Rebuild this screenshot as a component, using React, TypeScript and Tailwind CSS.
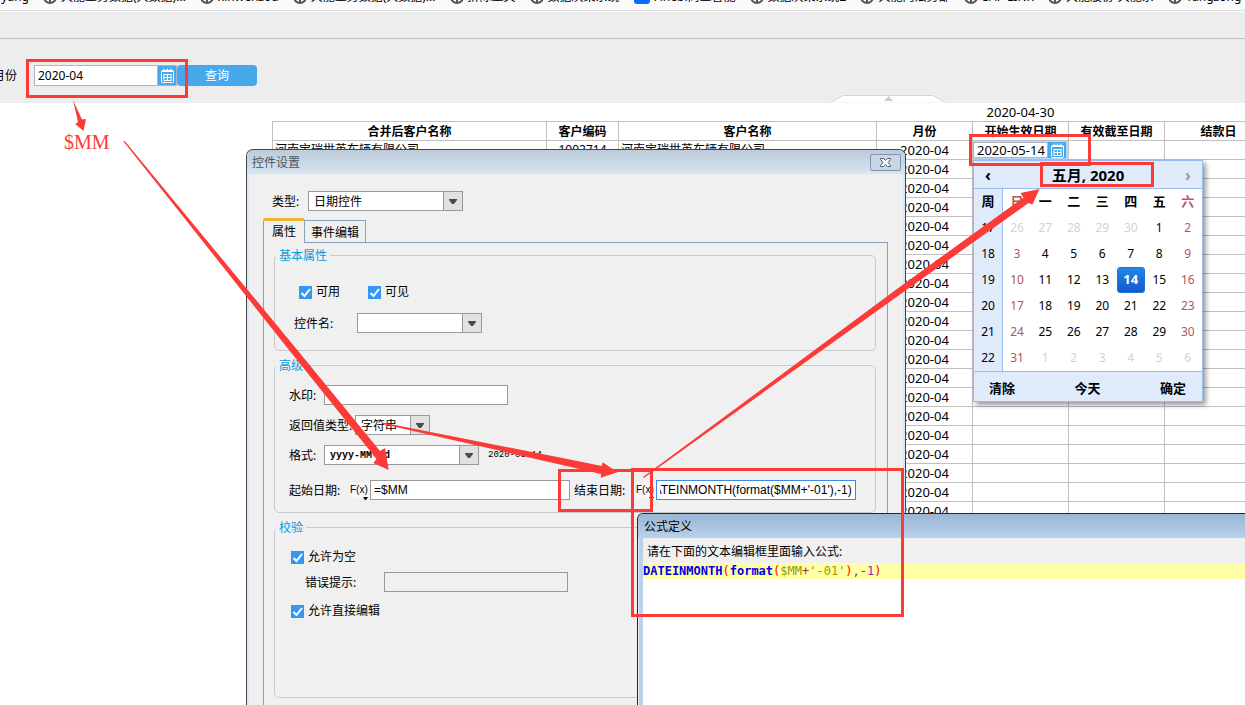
import { useEffect, useRef, useState } from 'react';
import type { ReactNode } from 'react';

const bookmarks = [
  { label: '天能业务数据(大数据)...' },
  { label: 'xinwenzou' },
  { label: '天能业务数据(大数据)...' },
  { label: '拼际显夹' },
  { label: '数据决策系统' },
  { label: 'Finebi商业智能', blue: true },
  { label: '数据决策系统2' },
  { label: '天能内法务部' },
  { label: 'SAP LINK' },
  { label: '天能股份-天能系' },
  { label: 'Yangzong' },
];

const weekdays = ['日', '一', '二', '三', '四', '五', '六'];

const weeks = [
  { no: 17, days: [26, 27, 28, 29, 30, 1, 2] },
  { no: 18, days: [3, 4, 5, 6, 7, 8, 9] },
  { no: 19, days: [10, 11, 12, 13, 14, 15, 16] },
  { no: 20, days: [17, 18, 19, 20, 21, 22, 23] },
  { no: 21, days: [24, 25, 26, 27, 28, 29, 30] },
  { no: 22, days: [31, 1, 2, 3, 4, 5, 6] },
];

const months = Array.from({ length: 20 }, () => '2020-04');

function CalendarIcon() {
  return (
    <svg viewBox="0 0 15 15" className="size-[15px]" fill="none" stroke="white">
      <rect x="1.5" y="2.5" width="12" height="12" rx="1" />
      <path d="M2 3.500h11M4 6.500v6M7.500 6v6.500M11 6.500v6M3.500 6.500h8M3.500 9.500h8M3.500 12.500h8" />
      <path d="M4 .5v3M7.500 .5v3M11 .5v3" />
    </svg>
  );
}

function Globe() {
  return (
    <svg viewBox="0 0 14 14" className="size-[14px] shrink-0" fill="none" stroke="#555" strokeWidth="2">
      <circle cx="7" cy="7" r="6" fill="white" />
      <path d="M3 4l3 2 1 3 0 3M9 3l2 3 -1 2" />
    </svg>
  );
}

function Combo({ id, value, className, textClass = '' }: { id: string; value: string; className: string; textClass?: string }) {
  return (
    <div className={`relative h-5 ${className}`}>
      <select
        id={id}
        defaultValue={value}
        className={`block h-5 w-full appearance-none rounded-none border border-[#999] bg-white pt-px pl-[5px] outline-none ${textClass}`}
      >
        <option value={value}>{value}</option>
      </select>
      <span className="pointer-events-none absolute inset-y-0 right-0 flex w-5 items-center justify-center border border-[#999] bg-[#e1e1e1]">
        <svg viewBox="0 0 8 5" className="h-[5px] w-2" fill="#4d4d4d">
          <path d="M0 0h8v1L5 5H3L0 1z" />
        </svg>
      </span>
    </div>
  );
}

function Check({ label }: { label: string }) {
  return (
    <label className="flex h-5 items-center gap-1">
      <span className="relative size-[13px]">
        <input type="checkbox" defaultChecked className="peer block size-[13px] appearance-none bg-white checked:bg-[#3497f3]" />
        <svg viewBox="0 0 13 13" className="pointer-events-none absolute inset-0 hidden peer-checked:block" fill="none" stroke="white" strokeWidth="2">
          <path d="M2.500 7l3 3L11 3" />
        </svg>
      </span>
      {label}
    </label>
  );
}

function Group({ title, className, children }: { title: string; className: string; children: ReactNode }) {
  return (
    <fieldset className={`mr-[11px] ml-[10px] rounded-[5px] border border-[#c9c9c9] ${className}`}>
      <legend className="ml-px px-[3px] pt-[2px] leading-[14px] text-[#0a9bdc]">{title}</legend>
      {children}
    </fieldset>
  );
}

function FxButton() {
  return (
    <button type="button" className="relative h-4 w-5 bg-[#f8f8f8] text-left font-['Liberation_Sans',sans-serif] text-[10px] leading-4">
      F(x)
      <svg viewBox="0 0 5 3" className="absolute right-0.5 -bottom-0.5 h-[3px] w-[5px]">
        <path d="M0 0h5L3 3H2z" />
      </svg>
    </button>
  );
}

function ReportTable() {
  const cell = 'h-[19px] border border-[#c0c0c0] p-0 overflow-hidden whitespace-nowrap';
  return (
    <table className="ml-[272px] w-[1000px] table-fixed border-collapse leading-[18px]">
      <colgroup>
        <col className="w-[274px]" />
        <col className="w-[72px]" />
        <col className="w-[258px]" />
        <col className="w-[96px]" />
        <col className="w-[96px]" />
        <col className="w-[96px]" />
        <col className="w-[108px]" />
      </colgroup>
      <thead>
        <tr>
          <td colSpan={4} className="h-[18px] p-0"></td>
          <td className="p-0 text-center text-[13px]">2020-04-30</td>
          <td colSpan={2} className="p-0"></td>
        </tr>
        <tr>
          {['合并后客户名称', '客户编码', '客户名称', '月份', '开始生效日期', '有效截至日期', '结款日'].map((h) => (
            <th key={h} className={`${cell} pt-px leading-[17px] font-bold`}>{h}</th>
          ))}
        </tr>
      </thead>
      <tbody>
        {months.map((month, i) => (
          <tr key={i}>
            <td className={`${cell} pl-0.5`}>{i === 0 ? '河南宝瑞世英车辆有限公司' : ''}</td>
            <td className={`${cell} text-center`}>{i === 0 ? '1002714' : ''}</td>
            <td className={`${cell} pl-0.5`}>{i === 0 ? '河南宝瑞世英车辆有限公司' : ''}</td>
            <td className={`${cell} text-center text-[13px]`}>{month}</td>
            <td className={cell}>
              {i === 0 && (
                <div className="flex h-[18px] bg-[#b9daf5] py-px pr-0.5">
                  <input
                    aria-label="开始生效日期"
                    defaultValue="2020-05-14"
                    className="h-4 w-[75px] border border-[#a9b4cc] bg-white pl-[3px] text-[13px] outline-none"
                  />
                  <button type="button" aria-label="选择日期" className="flex h-4 w-[18px] items-center justify-center bg-[#48a8ec]">
                    <CalendarIcon />
                  </button>
                </div>
              )}
            </td>
            <td className={cell}></td>
            <td className={cell}></td>
          </tr>
        ))}
      </tbody>
    </table>
  );
}

function DatePicker() {
  const [selected, setSelected] = useState('2-4');

  const dayColor = (w: number, d: number, day: number) => {
    if ((w === 0 && day > 20) || (w === 5 && day < 10)) return 'text-[#d3d3d3]';
    if (d === 0 || d === 6) return 'text-[#b25560]';
    return 'text-black';
  };

  return (
    <div className="absolute top-[160px] left-[973px] w-[230px] border border-[#97bcf3] bg-white shadow-[3px_3px_5px_rgba(0,0,0,0.4)]">
      <div className="flex h-7 items-center justify-between border-b border-[#97bcf3] bg-[#dfebfb]">
        <button type="button" className="w-7 text-base font-bold">‹</button>
        <span className="text-[15px] font-bold">五月, 2020</span>
        <button type="button" className="w-7 text-base font-bold text-[#999]">›</button>
      </div>
      <table className="w-full table-fixed border-collapse text-center">
        <thead>
          <tr>
            <th className="h-[26px] border-r border-[#97bcf3] bg-[#dfebfb] p-0 text-[13px]">周</th>
            {weekdays.map((d, i) => (
              <th key={d} className={`p-0 text-[13px] ${i % 6 === 0 ? 'text-[#b25560]' : ''}`}>{d}</th>
            ))}
          </tr>
        </thead>
        <tbody>
          {weeks.map((week, w) => (
            <tr key={week.no}>
              <td className="h-[26px] border-r border-[#97bcf3] bg-[#dfebfb] p-0">{week.no}</td>
              {week.days.map((day, d) => (
                <td key={d} className="h-[26px] p-0">
                  <button
                    type="button"
                    onClick={() => setSelected(`${w}-${d}`)}
                    className={
                      selected === `${w}-${d}`
                        ? 'block h-[26px] w-full rounded-[3px] border border-[#1b76dd] bg-linear-to-b from-[#1f8ae2] to-[#1b55cf] text-[13px] font-bold text-white'
                        : `block h-[26px] w-full ${dayColor(w, d, day)}`
                    }
                  >
                    {day}
                  </button>
                </td>
              ))}
            </tr>
          ))}
        </tbody>
      </table>
      <div className="flex h-[30px] items-center justify-between border-t border-[#97bcf3] bg-[#dfebfb] pt-1 pr-4 pl-[15px] text-[13px] font-bold">
        <button type="button">清除</button>
        <button type="button">今天</button>
        <button type="button">确定</button>
      </div>
    </div>
  );
}

function WidgetDialog() {
  const endRef = useRef<HTMLInputElement>(null);

  // keep the tail of the formula in view
  useEffect(() => {
    if (endRef.current) endRef.current.scrollLeft = endRef.current.scrollWidth;
  }, []);

  const box = 'block h-5 border border-[#999] outline-none';

  return (
    <section className="absolute top-[149px] bottom-0 left-[246px] flex w-[660px] flex-col overflow-hidden rounded-t-[7px] border border-b-0 border-[#41464b] bg-[#f0f0f0] shadow-[inset_2px_0_#dce6f0,inset_-2px_0_#dce6f0]">
      <header className="flex h-6 shrink-0 items-center justify-between bg-linear-to-b from-[#bccbd9] to-[#d8e5f2] pt-px pr-1 pl-[5px] text-[#4c555e]">
        <h2>控件设置</h2>
        <button type="button" aria-label="关闭" className="flex h-[17px] w-[31px] items-center justify-center rounded-[2px] border border-[#8193ae] bg-[#c9d7e5]">
          <svg viewBox="0 0 11 9" className="h-[9px] w-[11px]" fill="white" stroke="#4b5665">
            <path d="M.5 .5h3l2 2 2-2h3v1L8 4.500l2.500 3v1h-3l-2-2-2 2h-3v-1L3 4.500 .5 1.500z" />
          </svg>
        </button>
      </header>

      <div className="flex items-center pt-[17px] pl-[25px]">
        <label htmlFor="type" className="w-9 pt-px">类型:</label>
        <Combo id="type" value="日期控件" className="w-[155px]" />
      </div>

      <div className="relative z-10 mt-[7px] ml-4 flex items-end">
        <button type="button" className="h-[25px] w-[42px] rounded-t-[3px] border border-t-[3px] border-b-0 border-[#8e9fbc] border-t-[#f0b32d] bg-[#f0f0f0]">属性</button>
        <button type="button" className="h-[23px] w-[61px] border border-l-0 border-[#8e9fbc] pt-0.5">事件编辑</button>
      </div>

      <div className="-mt-px mr-[17px] ml-4 flex-1 border border-b-0 border-[#8e9fbc] pt-1">
        <Group title="基本属性" className="pb-[17px]">
          <div className="flex gap-7 pt-[19px] pl-6">
            <Check label="可用" />
            <Check label="可见" />
          </div>
          <div className="mt-[11px] flex items-center pl-[19px]">
            <label htmlFor="name" className="w-[63px] pt-px">控件名:</label>
            <Combo id="name" value="" className="w-[125px]" />
          </div>
        </Group>

        <Group title="高级" className="mt-[6px] pb-3">
          <div className="flex items-center pt-3 pl-[14px]">
            <label htmlFor="watermark" className="w-[35px] pt-px">水印:</label>
            <input id="watermark" className={`${box} w-[184px] bg-white`} />
          </div>
          <div className="mt-[10px] flex items-center pl-[14px]">
            <label htmlFor="ret" className="w-[66px] pt-px">返回值类型:</label>
            <Combo id="ret" value="字符串" className="w-[75px]" />
          </div>
          <div className="mt-[10px] flex items-center pl-[14px]">
            <label htmlFor="format" className="w-[35px] pt-px">格式:</label>
            <Combo id="format" value="yyyy-MM-dd" className="w-[155px]" textClass="font-['Liberation_Mono',monospace] text-[10px] font-bold" />
            <span className="ml-[9px] font-['Liberation_Mono',monospace] text-[9px]">2020-05-14</span>
          </div>
          <div className="mt-[15px] flex items-center pl-[14px]">
            <label htmlFor="start" className="w-[61px] pt-px">起始日期:</label>
            <FxButton />
            <input id="start" defaultValue="=$MM" className={`${box} w-[200px] bg-white px-[3px] font-['Liberation_Sans',sans-serif]`} />
            <label htmlFor="end" className="ml-1 w-[62px] pt-px">结束日期:</label>
            <FxButton />
            <input
              id="end"
              ref={endRef}
              defaultValue="DATEINMONTH(format($MM+'-01'),-1)"
              className="block h-5 w-[200px] border border-[#3b8ae6] bg-white px-[3px] font-['Liberation_Sans',sans-serif] outline-none"
            />
          </div>
        </Group>

        <Group title="校验" className="mt-[6px] pb-[76px]">
          <div className="pt-3 pl-4">
            <Check label="允许为空" />
          </div>
          <div className="mt-[5px] flex items-center pl-[30px]">
            <label htmlFor="error" className="w-[79px] pt-px">错误提示:</label>
            <input id="error" disabled className={`${box} w-[184px] bg-[#f0f0f0]`} />
          </div>
          <div className="mt-[9px] pl-4">
            <Check label="允许直接编辑" />
          </div>
        </Group>
      </div>
    </section>
  );
}

function FormulaDialog() {
  return (
    <section className="absolute top-[513px] right-0 bottom-0 left-[637px] flex flex-col overflow-hidden rounded-tl-[6px] border-t border-l border-[#24282c] bg-[#b9d1ea] shadow-[inset_1px_1px_#e4eef8]">
      <header className="flex h-6 shrink-0 items-center bg-linear-to-b from-[#99b6d4] to-[#b9d1ea] pt-px pl-[6px]">
        <h2>公式定义</h2>
      </header>
      <div className="ml-[5px] flex flex-1 flex-col bg-white">
        <p className="h-[25px] bg-[#f0f0f0] pt-1 pl-1 leading-5">请在下面的文本编辑框里面输入公式:</p>
        <code className="block h-4 bg-[#ffffa8] font-['DejaVu_Sans_Mono',monospace] leading-4 whitespace-pre text-[#9c27b0]">
          <b className="text-[#0000e6]">DATEINMONTH</b>
          <span className="text-[#f00]">(</span>
          <b className="text-[#0000e6]">format</b>
          <span className="text-[#f00]">(</span>
          <span className="text-[#9a9a00]">$MM</span>
          <span className="text-[#8a3a30]">+</span>
          <span className="text-[#9a9a00]">'-01'</span>
          <span className="text-[#f00]">)</span>
          <span className="text-[#804040]">,-</span>1
          <span className="text-[#f00]">)</span>
        </code>
      </div>
    </section>
  );
}

function Annotations() {
  const frame = 'absolute border-[3px] border-[#fc3a38]';
  return (
    <div className="pointer-events-none absolute inset-0">
      <div className={`${frame} top-[59px] left-[26px] h-[39px] w-[162px]`} />
      <div className={`${frame} top-[134px] left-[969px] h-[32px] w-[122px]`} />
      <div className={`${frame} top-[162px] left-[1040px] h-[25px] w-[114px]`} />
      <div className={`${frame} top-[469px] left-[558px] h-[43px] w-[95px]`} />
      <div className={`${frame} top-[468px] left-[631px] h-[149px] w-[273px]`} />
      <span className="absolute top-[128px] left-[64px] font-['Liberation_Serif',serif] text-xl text-[#fc3a38]">$MM</span>
      <svg className="absolute top-0 left-0" width="1245" height="705" viewBox="0 0 1245 705" fill="#fc3a38">
        <path d="M73 100 82 119.500 86 119 83.500 131 75.300 124 78 122z" />
        <path d="M123.500 141.500 124.500 140.800 297.300 350 380 451 385 448 388.700 470 373.300 463 376.500 459 289 350z" />
        <path d="M382.500 422.500 560 457.500 601.700 466 602.700 462.300 617.500 472.300 600.700 477.700 601 474 560 464.500 382.500 424z" />
        <path d="M643 477 900 286.700 1023.500 197.500 1020.500 193 1039.500 189 1032.500 204.500 1028.500 203 900 294.500 643.800 478z" />
      </svg>
    </div>
  );
}

export default function App() {
  return (
    <main className="relative h-screen overflow-hidden bg-white font-['Noto_Sans','Noto_Sans_CJK_SC',sans-serif] text-xs text-black">
      <nav className="h-[11px] overflow-hidden border-b border-[#dcdcdc] bg-[#fafafa]">
        <div className="-mt-[10px] flex gap-[14px] leading-[14px] whitespace-nowrap">
          <a href="#" className="w-[29px] shrink-0 text-right">yang</a>
          {bookmarks.map((b, i) => (
            <a key={i} href="#" className="flex shrink-0 gap-1">
              {b.blue ? <span className="h-[14px] w-4 rounded-[3px] bg-[#0a6cff]" /> : <Globe />}
              {b.label}
            </a>
          ))}
        </div>
      </nav>

      <div className="mt-px h-[27px] border-b border-[#c0c0c0] bg-[#ededed]" />
      <div className="relative h-16 bg-[#ededed]">
        <form className="-ml-[7px] flex pt-[26px]" onSubmit={(e) => e.preventDefault()}>
          <label htmlFor="month" className="w-[41px] leading-[21px]">月份</label>
          <input id="month" defaultValue="2020-04" className="h-[21px] w-[124px] border border-[#adb3c9] bg-white pl-[3px] outline-none" />
          <button type="button" aria-label="选择月份" className="flex h-[21px] w-[19px] items-center justify-center border-y border-r border-[#adb3c9] bg-[#48a8ec]">
            <CalendarIcon />
          </button>
          <button type="submit" className="h-[21px] w-20 rounded-[4px] bg-[#48a8ec] pt-px text-white">查询</button>
        </form>
        <svg viewBox="0 0 114 8" className="absolute bottom-0 left-[831px] h-2 w-[114px]">
          <path d="M0 7.500 12 .5h90L114 7.500" fill="white" stroke="#d4d4d4" />
          <path d="M53 6l4.500-5 4.500 5z" fill="#ccc" />
        </svg>
      </div>

      <ReportTable />
      <WidgetDialog />
      <DatePicker />
      <FormulaDialog />
      <Annotations />
    </main>
  );
}
